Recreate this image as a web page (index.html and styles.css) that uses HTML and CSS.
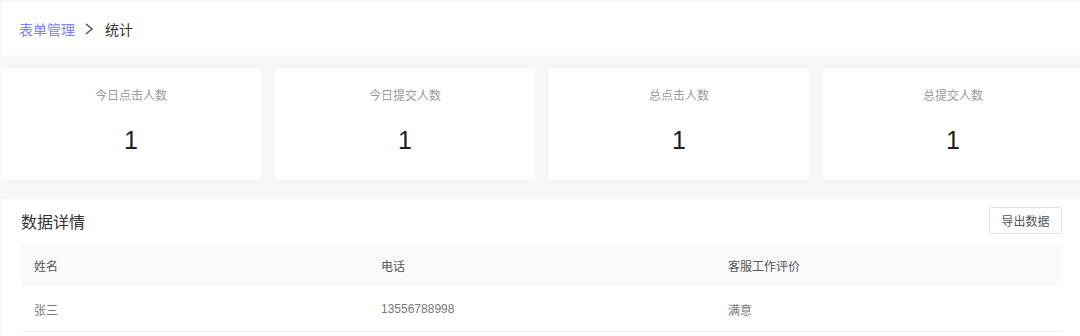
FILE: index.html
```html
<!DOCTYPE html>
<html lang="zh">
<head>
<meta charset="utf-8">
<link rel="stylesheet" href="styles.css">
</head>
<body>
<div class="header">
  <span class="crumb-link">表单管理</span>
  <svg class="crumb-sep" width="8" height="12" viewBox="0 0 8 12"><path d="M1 1 L7 6 L1 11" fill="none" stroke="#555" stroke-width="1.5"/></svg>
  <span class="crumb-cur">统计</span>
</div>
<div class="cards">
  <div class="card"><div class="card-label">今日点击人数</div><div class="card-num">1</div></div>
  <div class="card"><div class="card-label">今日提交人数</div><div class="card-num">1</div></div>
  <div class="card"><div class="card-label">总点击人数</div><div class="card-num">1</div></div>
  <div class="card"><div class="card-label">总提交人数</div><div class="card-num">1</div></div>
</div>
<div class="panel">
  <div class="panel-head">
    <div class="panel-title">数据详情</div>
    <button class="btn">导出数据</button>
  </div>
  <div class="table">
    <div class="row head-row">
      <div class="cell">姓名</div>
      <div class="cell">电话</div>
      <div class="cell">客服工作评价</div>
    </div>
    <div class="row body-row">
      <div class="cell">张三</div>
      <div class="cell num">13556788998</div>
      <div class="cell">满意</div>
    </div>
  </div>
</div>
</body>
</html>
```
FILE: styles.css
```css
* { box-sizing: border-box; }
html, body { margin: 0; padding: 0; }
body {
  background: #f7f7f7;
  font-family: "Liberation Sans", "Noto Sans CJK SC", sans-serif;
  width: 1080px;
  height: 336px;
  overflow: hidden;
}
.header {
  margin: 2px 0 0 2px;
  height: 53px;
  background: #fff;
  display: flex;
  align-items: center;
  padding-left: 17px;
  font-size: 14px;
  font-family: "Noto Sans CJK SC", sans-serif;
}
.crumb-link { color: #8080f5; }
.crumb-sep { margin: 0 12px 0 10px; display: block; }
.crumb-cur { color: #333; }
.cards {
  margin-top: 14px;
  padding-left: 1px;
  display: grid;
  grid-template-columns: repeat(4, 260px);
  gap: 14px;
}
.card {
  background: #fff;
  height: 110px;
  text-align: center;
  padding-top: 18px;
}
.card-label {
  font-family: "Noto Sans CJK SC", sans-serif;
  font-size: 12px;
  line-height: 16px;
  color: #9a9a9a;
}
.card-num {
  margin-top: 25px;
  font-size: 25px;
  line-height: 25px;
  color: #222;
}
.panel {
  margin: 20px 0 0 1px;
  background: #fff;
  padding: 8px 18px 0 20px;
  height: 140px;
}
.panel-head {
  display: flex;
  justify-content: space-between;
  align-items: center;
  height: 27px;
}
.panel-title {
  font-family: "Noto Sans CJK SC", sans-serif;
  font-size: 16px;
  color: #333;
  padding-top: 1px;
}
.btn {
  width: 73px;
  height: 27px;
  border: 1px solid #dcdfe6;
  border-radius: 3px;
  background: #fff;
  font-family: "Noto Sans CJK SC", sans-serif;
  font-size: 12px;
  color: #555;
  padding: 0;
}
.table { margin-top: 9px; }
.row {
  display: grid;
  grid-template-columns: repeat(3, 1fr);
  align-items: center;
  font-size: 12px;
}
.head-row {
  height: 44px;
  background: #fafafa;
  color: #555;
}
.body-row {
  height: 45px;
  border-bottom: 1px solid #ebeef5;
  color: #777;
}
.cell {
  padding-left: 13px;
  font-family: "Noto Sans CJK SC", sans-serif;
}
.cell.num { font-family: "Liberation Sans", sans-serif; }
```
